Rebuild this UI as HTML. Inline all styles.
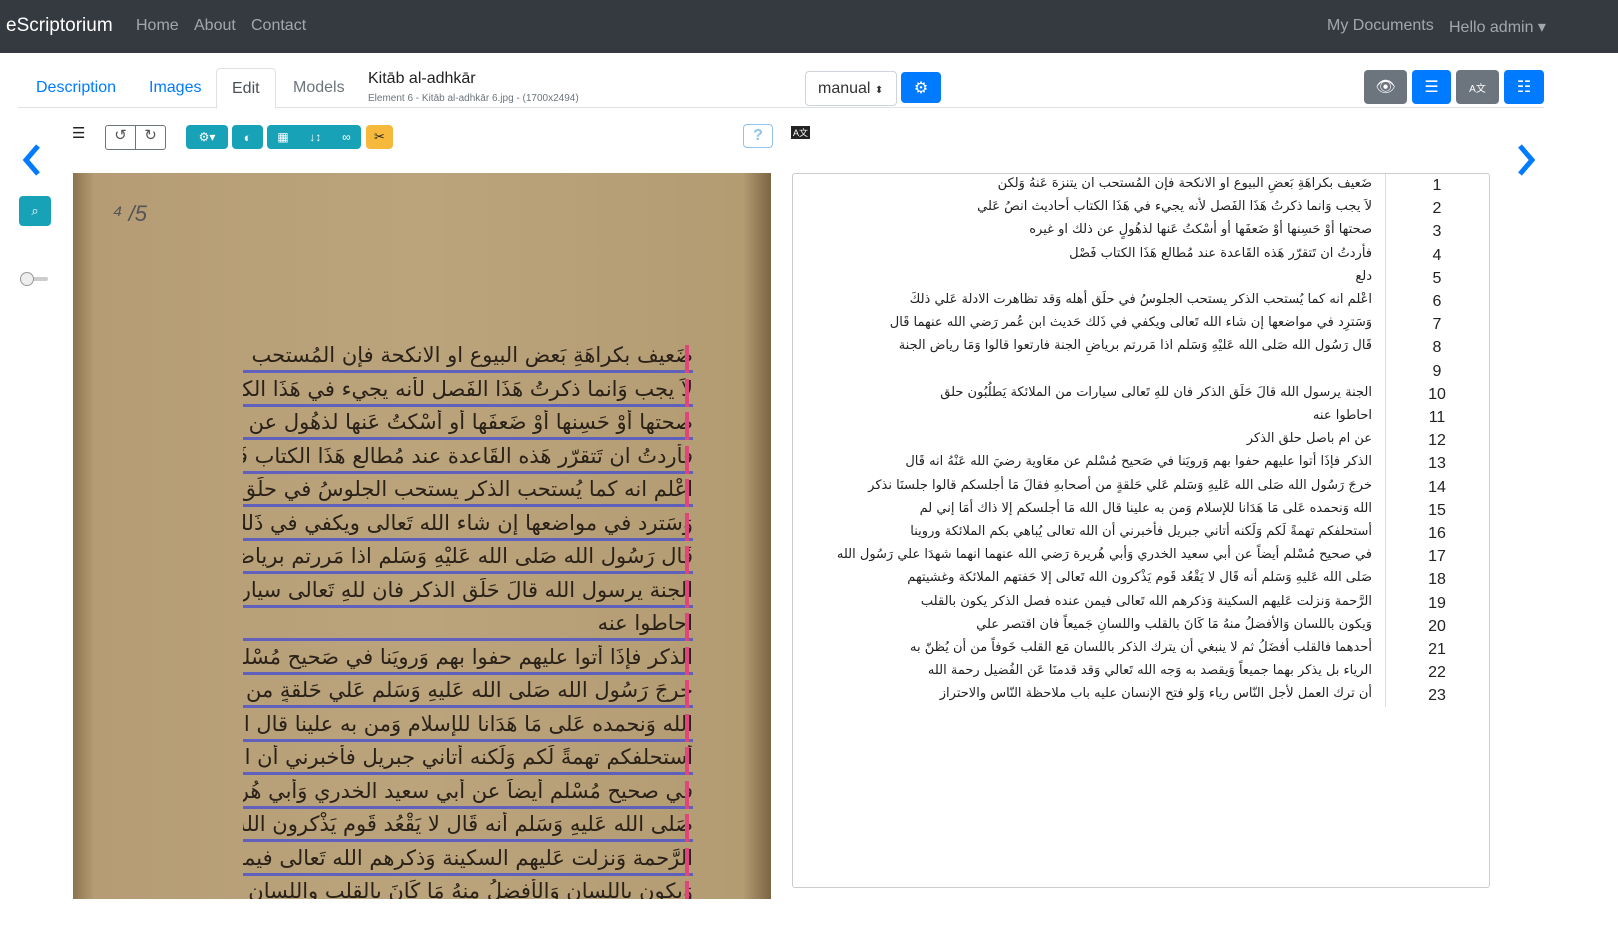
<!DOCTYPE html>
<html><head><meta charset="utf-8"><style>
*{box-sizing:border-box;margin:0;padding:0}
body{width:1618px;height:928px;overflow:hidden;background:#fff;font-family:"Liberation Sans","DejaVu Sans",sans-serif;position:relative}
.nav{position:absolute;left:0;top:0;width:1618px;height:53px;background:#343a40}
.nav span{position:absolute;top:17px;font-size:16px;color:rgba(255,255,255,.55)}
.abs{position:absolute}
.tab{position:absolute;top:68px;height:40px;font-size:16px;line-height:40px;color:#007bff;padding:0 18px}
.btn{position:absolute;border-radius:4px;display:flex;align-items:center;justify-content:center;color:#fff}
.tl{position:absolute;right:246px;font-size:13px;direction:rtl;text-align:right;white-space:nowrap;color:#222;font-family:"DejaVu Sans",sans-serif}
.num{position:absolute;left:1420px;width:34px;text-align:center;font-size:16px;color:#222}
.ms{position:absolute;left:73px;top:173px;width:698px;height:726px;background:linear-gradient(90deg,#8c7350 0,#b59c74 3%,#bba47c 50%,#b39b72 96%,#7c6444 100%);overflow:hidden}
.ml{position:absolute;left:170px;width:450px;height:3px;background:#4f56c8;opacity:.85}
.mt{position:absolute;left:170px;width:450px;font-size:21px;direction:rtl;white-space:nowrap;overflow:hidden;color:#2a2118;font-family:"DejaVu Sans",sans-serif;letter-spacing:-1.5px}
</style></head><body>
<div class="nav">
<span style="left:6px;top:15px;font-size:19px;color:#fff">eScriptorium</span>
<span style="left:136px">Home</span><span style="left:194px">About</span><span style="left:251px">Contact</span>
<span style="left:1327px">My Documents</span><span style="left:1449px">Hello admin ▾</span>
</div>
<div class="abs" style="left:18px;top:107px;width:1526px;height:1px;background:#dee2e6"></div>
<div class="tab" style="left:18px">Description</div>
<div class="tab" style="left:131px">Images</div>
<div class="tab" style="left:216px;width:60px;color:#495057;background:#fff;border:1px solid #dee2e6;border-bottom-color:#fff;border-radius:4px 4px 0 0;padding:0 15px;height:41px">Edit</div>
<div class="tab" style="left:275px;color:#6c757d">Models</div>
<div class="abs" style="left:368px;top:70px;font-size:16px;color:#222">Kitāb al-adhkār</div>
<div class="abs" style="left:368px;top:93px;font-size:10px;color:#6c757d">Element 6 - Kitāb al-adhkār 6.jpg - (1700x2494)</div>
<div class="abs" style="left:805px;top:71px;width:92px;height:35px;border:1px solid #ced4da;border-radius:4px;font-size:16px;line-height:33px;padding-left:12px;color:#333">manual <span style="font-size:10px">⬍</span></div>
<div class="btn" style="left:901px;top:72px;width:40px;height:31px;background:#007bff;font-size:16px">⚙</div>
<div class="btn" style="left:1364px;top:70px;width:43px;height:34px;background:#6c757d">👁</div>
<div class="btn" style="left:1412px;top:70px;width:39px;height:34px;background:#007bff;font-size:16px">☰</div>
<div class="btn" style="left:1456px;top:70px;width:43px;height:34px;background:#6c757d;font-size:10px">A文</div>
<div class="btn" style="left:1504px;top:70px;width:40px;height:34px;background:#007bff;font-size:16px">☷</div>
<div class="abs" style="left:72px;top:124px;font-size:15px;color:#222">☰</div>
<div class="abs" style="left:105px;top:125px;width:61px;height:25px;border:1px solid #6c757d;border-radius:3px;font-size:15px;color:#555;display:flex"><span style="flex:1;text-align:center;border-right:1px solid #6c757d">↺</span><span style="flex:1;text-align:center">↻</span></div>
<div class="btn" style="left:186px;top:125px;width:42px;height:24px;background:#17a2b8;font-size:12px">⚙▾</div>
<div class="btn" style="left:232px;top:125px;width:31px;height:24px;background:#17a2b8;font-size:13px">◐</div>
<div class="btn" style="left:267px;top:125px;width:94px;height:24px;background:#17a2b8;font-size:12px;justify-content:space-around">▦ <span>↓↕</span> ∞</div>
<div class="btn" style="left:366px;top:125px;width:27px;height:24px;background:#f6b93b;color:#222;font-size:13px">✂</div>
<div class="btn" style="left:743px;top:124px;width:30px;height:24px;border:1px solid #8cc4ee;color:#8cc4ee;font-weight:bold">?</div>
<div class="abs" style="left:791px;top:126px;font-size:9px;background:#222;color:#fff;padding:0 2px">A文</div>
<svg class="abs" style="left:20px;top:143px" width="24" height="34"><path d="M18 3 L6 17 L18 31" stroke="#007bff" stroke-width="5" fill="none"/></svg>
<svg class="abs" style="left:1514px;top:143px" width="24" height="34"><path d="M6 3 L18 17 L6 31" stroke="#007bff" stroke-width="5" fill="none"/></svg>
<div class="btn" style="left:19px;top:196px;width:32px;height:30px;background:#17a2b8;font-size:13px">⌕</div>
<div class="abs" style="left:20px;top:277px;width:28px;height:4px;background:#ccc;border-radius:2px"></div>
<div class="abs" style="left:20px;top:272px;width:14px;height:14px;background:#eee;border:1px solid #999;border-radius:50%"></div>
<div class="ms">
<div class="abs" style="left:40px;top:28px;font-size:22px;color:#555;font-style:italic">⁴ /5</div>
<div id="mlines"></div>
</div>
<div class="abs" style="left:792px;top:173px;width:698px;height:715px;border:1px solid #ccc;border-radius:3px"></div>
<div class="abs" style="left:1385px;top:174px;width:1px;height:533px;background:#ddd"></div>
<div id="tl"></div>
<script>
var L=["ضَعيف بكراهَةِ بَعضِ البيوع او الانكحة فإن المُستحب ان يتنزهَ عَنهُ وَلكن","لاَ يجب وَانما ذكرتُ هَذَا الفَصل لأنه يجيء في هَذَا الكتاب أحاديث انصُ عَلي","صحتها أوْ حَسِنها أوْ ضَعفَها أو أسْكتُ عَنها لذهُولٍ عن ذلك او غيره","فأردتُ ان تَتقرّر هَذه القَاعدة عند مُطالع هَذَا الكتاب فَصْل","دلع","اعْلم انه كما يُستحب الذكر يستحب الجلوسُ في حلَق أهله وَقد تظاهرت الادلة عَلي ذلكَ","وَسَترِد في مواضعها إن شاء الله تَعالى ويكفي في ذَلك حَديث ابن عُمر رَضي الله عنهما قَال","قَال رَسُول الله صَلى الله عَليْهِ وَسَلم اذا مَررتم برياضِ الجنة فارتعوا قالوا وَمَا رياض الجنة","","الجنة يرسول الله قالَ حَلَق الذكر فان للهِ تَعالى سيارات من الملائكة يَطلُبُون حلق","احاطوا عنه","عن ام باصل حلق الذكر","الذكر فإذَا أتوا عليهم حفوا بهم وَرويَنا في صَحيح مُسْلم عن معَاوية رضيَ الله عَنْهُ انه قَال","خرجَ رَسُول الله صَلى الله عَليهِ وَسَلم عَلي حَلقةٍ من أصحابهِ فقالَ مَا أجلسكم قالوا جلسنَا نذكر","الله وَنحمده عَلى مَا هَدَانا للإسلام وَمن به علينا قال الله مَا أجلسكم إلا ذاك أمَا إني لم","أستحلفكم تهمةً لَكم وَلَكنه أتاني جبريل فأخبرني أن الله تعالى يُباهي بكم الملائكة وروينا","في صحيح مُسْلم أيضاً عن أبي سعيد الخدري وَأبي هُريرة رَضي الله عنهما انهما شهدَا علي رَسُول الله","صَلى الله عَليهِ وَسَلم أنه قَال لا يَقْعُد قَوم يَذْكرون الله تَعالى إلا حَفتهم الملائكة وغشيتهم","الرَّحمة وَنزلت عَليهم السكينة وَذكرهم الله تَعالى فيمن عنده فصل الذكر يكون بالقلب","وَيكون باللسان وَالأفضلُ منهُ مَا كَانَ بالقلب واللسانِ جَميعاً فان اقتصر علي","أحدهما فالقلب أفضَلُ ثم لا ينبغي أن يترك الذكر باللسان مَع القلب خَوفاً من أن يُظنّ به","الرياء بل يذكر بهما جميعاً وَيقصد به وَجه الله تَعالي وَقد قدمنَا عَن الفُضيل رحمة الله","أن ترك العمل لأجل النّاس رياء وَلو فتح الإنسان عليه باب ملاحظة النّاس والاحتراز"];
var h="";for(var i=0;i<23;i++){var y=176+i*23.2;h+='<div class="tl" style="top:'+y+'px">'+L[i]+'</div><div class="num" style="top:'+(y+1)+'px">'+(i+1)+'</div>';}
document.getElementById("tl").innerHTML=h;
var M=[0,1,2,3,5,6,7,9,10,12,13,14,15,16,17,18,19,20,21,22];
var m="";for(var j=0;j<17;j++){var y=170+j*33.5;m+='<div class="mt" style="top:'+(y)+'px">'+L[M[j]]+'</div><div class="ml" style="top:'+(y+27)+'px"></div><div class="abs" style="left:612px;top:'+(y+2)+'px;width:4px;height:28px;background:#e0457b"></div>';}
document.getElementById("mlines").innerHTML=m;
</script>
</body></html>
